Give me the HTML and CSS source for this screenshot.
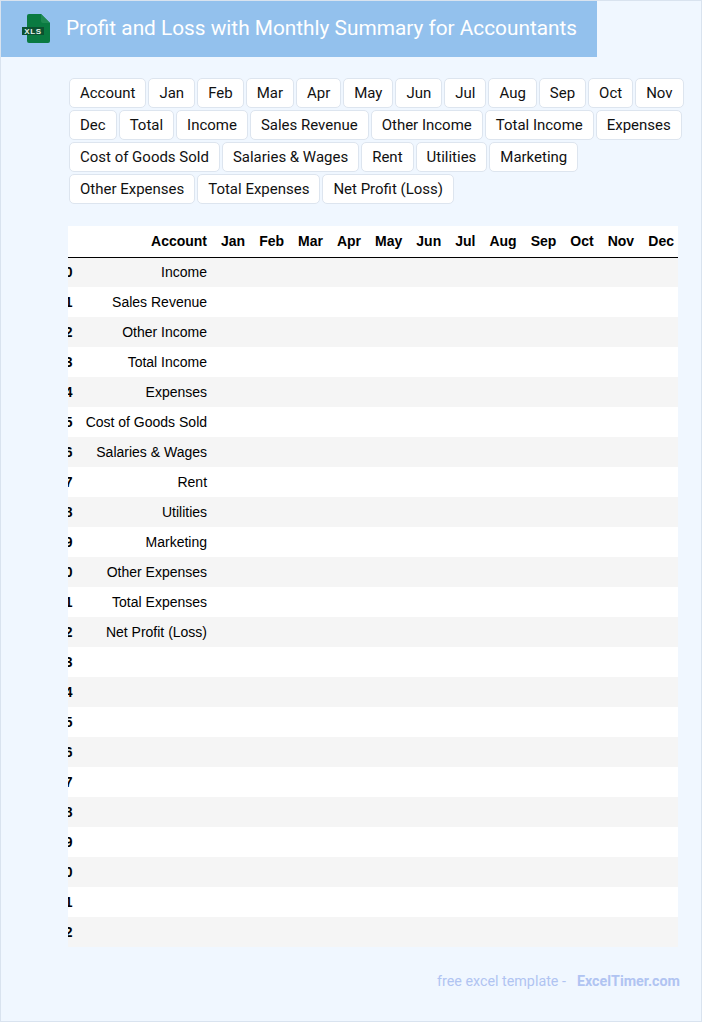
FILE: index.html
```html
<!DOCTYPE html>
<html lang="en">
<head>
<meta charset="utf-8">
<title>Profit and Loss with Monthly Summary for Accountants</title>
<link rel="stylesheet" href="styles.css">
</head>
<body>
<div class="page">
  <header class="banner">
    <svg class="file-icon" width="32" height="32" viewBox="0 0 32 32" aria-hidden="true">
      <path class="file-body" d="M8 1h12l9 9v18a2 2 0 0 1-2 2h-19a2 2 0 0 1-2-2v-25a2 2 0 0 1 2-2z"/>
      <path class="file-fold" d="M20 1l9 9h-7a2 2 0 0 1-2-2z"/>
      <rect class="file-band" x="1" y="14" width="22" height="8"/>
      <text class="file-label" x="12" y="21" text-anchor="middle">XLS</text>
    </svg>
    <h1 class="title">Profit and Loss with Monthly Summary for Accountants</h1>
  </header>

  <div class="tags">
    <span class="tag">Account</span><span class="tag">Jan</span><span class="tag">Feb</span><span class="tag">Mar</span><span class="tag">Apr</span><span class="tag">May</span><span class="tag">Jun</span><span class="tag">Jul</span><span class="tag">Aug</span><span class="tag">Sep</span><span class="tag">Oct</span><span class="tag">Nov</span><span class="tag">Dec</span><span class="tag">Total</span><span class="tag">Income</span><span class="tag">Sales Revenue</span><span class="tag">Other Income</span><span class="tag">Total Income</span><span class="tag">Expenses</span><span class="tag">Cost of Goods Sold</span><span class="tag">Salaries &amp; Wages</span><span class="tag">Rent</span><span class="tag">Utilities</span><span class="tag">Marketing</span><span class="tag">Other Expenses</span><span class="tag">Total Expenses</span><span class="tag">Net Profit (Loss)</span>
  </div>

  <div class="table-wrap">
    <table class="sheet">
      <thead>
        <tr><th></th><th>Account</th><th>Jan</th><th>Feb</th><th>Mar</th><th>Apr</th><th>May</th><th>Jun</th><th>Jul</th><th>Aug</th><th>Sep</th><th>Oct</th><th>Nov</th><th>Dec</th></tr>
      </thead>
      <tbody>
        <tr><th>0</th><td>Income</td><td colspan="12"></td></tr>
        <tr><th>1</th><td>Sales Revenue</td><td colspan="12"></td></tr>
        <tr><th>2</th><td>Other Income</td><td colspan="12"></td></tr>
        <tr><th>3</th><td>Total Income</td><td colspan="12"></td></tr>
        <tr><th>4</th><td>Expenses</td><td colspan="12"></td></tr>
        <tr><th>5</th><td>Cost of Goods Sold</td><td colspan="12"></td></tr>
        <tr><th>6</th><td>Salaries &amp; Wages</td><td colspan="12"></td></tr>
        <tr><th>7</th><td>Rent</td><td colspan="12"></td></tr>
        <tr><th>8</th><td>Utilities</td><td colspan="12"></td></tr>
        <tr><th>9</th><td>Marketing</td><td colspan="12"></td></tr>
        <tr><th>10</th><td>Other Expenses</td><td colspan="12"></td></tr>
        <tr><th>11</th><td>Total Expenses</td><td colspan="12"></td></tr>
        <tr><th>12</th><td>Net Profit (Loss)</td><td colspan="12"></td></tr>
        <tr><th>13</th><td></td><td colspan="12"></td></tr>
        <tr><th>14</th><td></td><td colspan="12"></td></tr>
        <tr><th>15</th><td></td><td colspan="12"></td></tr>
        <tr><th>16</th><td></td><td colspan="12"></td></tr>
        <tr><th>17</th><td></td><td colspan="12"></td></tr>
        <tr><th>18</th><td></td><td colspan="12"></td></tr>
        <tr><th>19</th><td></td><td colspan="12"></td></tr>
        <tr><th>20</th><td></td><td colspan="12"></td></tr>
        <tr><th>21</th><td></td><td colspan="12"></td></tr>
        <tr><th>22</th><td></td><td colspan="12"></td></tr>
      </tbody>
    </table>
  </div>

  <footer class="credit">
    <span class="credit-text">free excel template -</span>
    <span class="credit-site">ExcelTimer.com</span>
  </footer>
</div>
</body>
</html>
```
FILE: styles.css
```css
* { box-sizing: border-box; }
html, body { margin: 0; padding: 0; }
body { width: 702px; height: 1022px; overflow: hidden; }

.page {
  height: 1022px;
  background: #f0f7ff;
  border: 1px solid #d9e3ef;
  font-family: Roboto, sans-serif;
}

.banner {
  width: 596px;
  height: 56px;
  background: #93c1ed;
  display: flex;
  align-items: center;
  padding-left: 20px;
  gap: 13px;
}
.file-icon { flex: none; }
.file-body { fill: #0a7a41; }
.file-fold { fill: #1f8a52; }
.file-band { fill: #0b5130; }
.file-label {
  font-family: "Liberation Sans", sans-serif;
  font-size: 8px;
  font-weight: 700;
  letter-spacing: .6px;
  fill: #e8f3ec;
}
.title {
  margin: 0 0 2px;
  font-size: 20.8px;
  font-weight: 400;
  color: #fff;
  white-space: nowrap;
}

.tags {
  display: flex;
  flex-wrap: wrap;
  gap: 2px;
  padding: 21px 0 0 68px;
}
.tag {
  height: 30px;
  line-height: 28px;
  padding: 0 10px;
  background: #fff;
  border: 1px solid #dde5ef;
  border-radius: 5px;
  font-size: 14.99px;
  color: #111;
  white-space: nowrap;
}

.table-wrap {
  width: 610px;
  margin: 22px 0 0 67px;
  overflow: hidden;
}
.sheet {
  border-collapse: collapse;
  width: 632px;
  margin-left: -22px;
  background: #fff;
  font-family: "Liberation Sans", sans-serif;
  font-size: 14px;
  color: #000;
}
.sheet th, .sheet td {
  padding: 0 4px 0 10px;
  text-align: right;
  height: 30px;
  white-space: nowrap;
}
.sheet th { font-weight: 700; }
.sheet tbody th { padding: 0 3px 0 11px; }
.sheet thead tr { height: 31px; }
.sheet thead th { border-bottom: 1px solid #000; height: 31px; }
.sheet tbody tr:nth-child(odd) { background: #f5f5f5; }

.credit {
  display: flex;
  justify-content: flex-end;
  gap: 11px;
  padding: 26px 21px 0 0;
  font-size: 14.3px;
  color: #b0c4f2;
}
.credit-site { font-weight: 700; }
```
